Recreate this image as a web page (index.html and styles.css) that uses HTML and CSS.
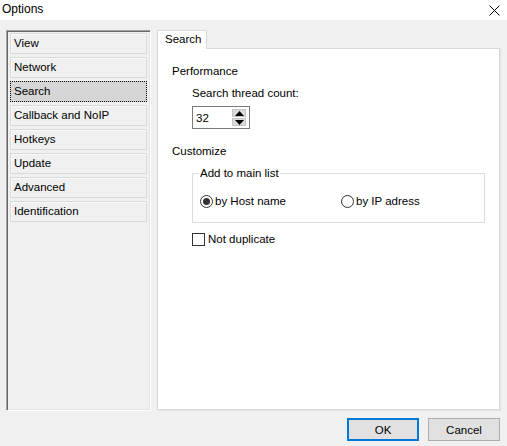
FILE: index.html
```html
<!DOCTYPE html>
<html>
<head>
<meta charset="utf-8">
<link rel="stylesheet" href="styles.css">
</head>
<body>
<div class="window">
  <div class="titlebar">
    <span class="title">Options</span>
    <svg class="close" width="11" height="11" viewBox="0 0 11 11"><path d="M0.5 0.5 L10.5 10.5 M10.5 0.5 L0.5 10.5" stroke="#000" stroke-width="1" fill="none"/></svg>
  </div>
  <div class="main">
    <div class="listbox">
      <div class="item">View</div>
      <div class="item">Network</div>
      <div class="item selected">Search</div>
      <div class="item">Callback and NoIP</div>
      <div class="item">Hotkeys</div>
      <div class="item">Update</div>
      <div class="item">Advanced</div>
      <div class="item">Identification</div>
    </div>
    <div class="tabs">
      <div class="tabstrip"><div class="tab">Search</div></div>
      <div class="page">
        <div class="section">Performance</div>
        <div class="indent">
          <div class="label">Search thread count:</div>
          <div class="spin">
            <span class="spinval">32</span>
            <div class="spinbtns">
              <div class="spinbtn"><svg width="9" height="5" viewBox="0 0 9 5"><path d="M4.5 0 L9 5 L0 5 Z" fill="#000"/></svg></div>
              <div class="spinbtn"><svg width="9" height="5" viewBox="0 0 9 5"><path d="M0 0 L9 0 L4.5 5 Z" fill="#000"/></svg></div>
            </div>
          </div>
        </div>
        <div class="section customize">Customize</div>
        <div class="indent">
          <div class="group">
            <span class="legend">Add to main list</span>
            <div class="radios">
              <label class="radio"><span class="rbox checked"></span>by Host name</label>
              <label class="radio"><span class="rbox"></span>by IP adress</label>
            </div>
          </div>
          <label class="check"><span class="cbox"></span>Not duplicate</label>
        </div>
      </div>
    </div>
  </div>
  <div class="footer">
    <button class="btn default">OK</button>
    <button class="btn">Cancel</button>
  </div>
</div>
</body>
</html>
```
FILE: styles.css
```css
html, body {
  margin: 0;
  padding: 0;
}
body {
  width: 507px;
  height: 446px;
  overflow: hidden;
  background: #f0f0f0;
  font-family: "Liberation Sans", Arial, sans-serif;
  font-size: 11.5px;
  color: #000;
}
.window {
  display: flex;
  flex-direction: column;
  height: 446px;
}
.titlebar {
  height: 20px;
  background: #fff;
  display: flex;
  align-items: center;
  justify-content: space-between;
  padding: 0 7px 2px 2px;
  box-sizing: border-box;
}
.title {
  font-size: 12px;
}
.close {
  display: block;
  margin-top: 2px;
}
.main {
  display: flex;
  padding: 10px 6px 0 6px;
  gap: 6px;
}
.listbox {
  width: 145px;
  height: 381px;
  box-sizing: border-box;
  border: 1px solid;
  border-color: #a0a0a0 #fff #fff #a0a0a0;
  box-shadow: inset 1px 1px 0 #696969, inset -1px -1px 0 #e3e3e3;
  padding: 2px 3px 0 3px;
  display: flex;
  flex-direction: column;
  gap: 3px;
}
.item {
  height: 21px;
  box-sizing: border-box;
  border: 1px solid #d9d9d9;
  box-shadow: inset 1px 1px 0 #fafafa;
  padding-left: 3px;
  line-height: 19px;
  white-space: nowrap;
}
.item.selected {
  background: #d6d6d6;
  border: 1px dotted #000;
  box-shadow: none;
}
.tabs {
  width: 343px;
  display: flex;
  flex-direction: column;
}
.tabstrip {
  display: flex;
  height: 18px;
}
.tab {
  width: 50px;
  height: 19px;
  box-sizing: border-box;
  background: #fff;
  border: 1px solid #d9d9d9;
  border-bottom: none;
  padding-left: 7px;
  line-height: 17px;
  position: relative;
  z-index: 1;
}
.page {
  height: 362px;
  box-sizing: border-box;
  background: #fff;
  border: 1px solid #d9d9d9;
  box-shadow: 1px 1px 0 #e3e3e3;
  padding: 15px 14px 0 14px;
}
.section {
  line-height: 15px;
}
.customize {
  margin-top: 15px;
}
.indent {
  padding-left: 20px;
}
.label {
  margin-top: 7px;
  line-height: 15px;
}
.spin {
  margin-top: 5px;
  width: 58px;
  height: 23px;
  box-sizing: border-box;
  border: 1px solid #7a7a7a;
  display: flex;
  align-items: center;
  justify-content: space-between;
  padding: 0 3px 0 3px;
}
.spinbtns {
  display: flex;
  flex-direction: column;
  gap: 1px;
}
.spinbtn {
  width: 14px;
  height: 8px;
  box-sizing: border-box;
  background: #dadada;
  border: 1px solid #c4c4c4;
  display: flex;
  align-items: center;
  justify-content: center;
}
.spinbtn svg {
  display: block;
}
.group {
  position: relative;
  margin-top: 14px;
  height: 50px;
  box-sizing: border-box;
  border: 1px solid #dcdcdc;
  padding: 20px 0 0 7px;
}
.legend {
  position: absolute;
  top: -8px;
  left: 6px;
  background: #fff;
  padding: 0 1px;
  line-height: 15px;
}
.radios {
  display: flex;
}
.radio, .check {
  display: flex;
  align-items: center;
  line-height: 15px;
  gap: 2px;
}
.radio {
  width: 141px;
}
.rbox {
  width: 13px;
  height: 13px;
  box-sizing: border-box;
  border: 1px solid #333;
  border-radius: 50%;
  background: #fff;
  display: flex;
  align-items: center;
  justify-content: center;
}
.rbox.checked::after {
  content: "";
  width: 7px;
  height: 7px;
  border-radius: 50%;
  background: #333;
}
.check {
  margin-top: 9px;
  gap: 3px;
}
.cbox {
  width: 13px;
  height: 13px;
  box-sizing: border-box;
  border: 1px solid #333;
  background: #fff;
}
.footer {
  display: flex;
  justify-content: flex-end;
  gap: 9px;
  padding: 7px 7px 0 0;
}
.btn {
  width: 72px;
  height: 23px;
  box-sizing: border-box;
  background: #e1e1e1;
  border: 1px solid #adadad;
  font-family: "Liberation Sans", Arial, sans-serif;
  font-size: 11.5px;
  color: #000;
  padding: 0;
  margin: 0;
}
.btn.default {
  border: 2px solid #0078d7;
}
```
